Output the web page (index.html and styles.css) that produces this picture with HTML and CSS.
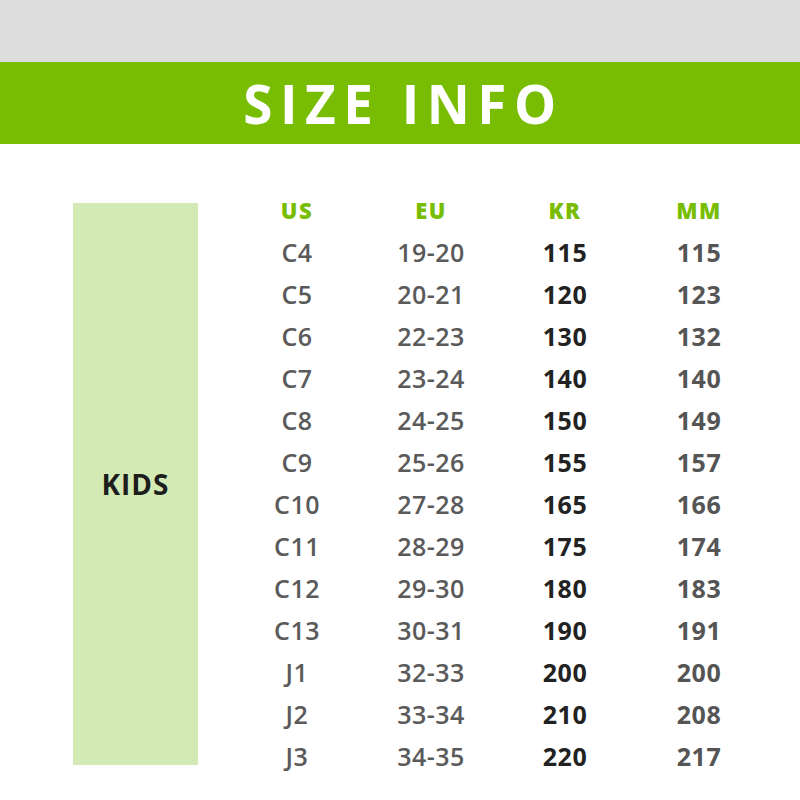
FILE: index.html
```html
<!DOCTYPE html>
<html>
<head>
<meta charset="utf-8">
<link rel="stylesheet" href="styles.css">
</head>
<body>
<div class="top"></div>
<div class="band"><h1 class="title">SIZE INFO</h1></div>
<div class="content">
  <div class="kids"><span>KIDS</span></div>
  <div class="table">
    <div class="h">US</div><div class="h">EU</div><div class="h">KR</div><div class="h">MM</div>
    <div>C4</div><div>19-20</div><div class="kr">115</div><div class="mm">115</div>
    <div>C5</div><div>20-21</div><div class="kr">120</div><div class="mm">123</div>
    <div>C6</div><div>22-23</div><div class="kr">130</div><div class="mm">132</div>
    <div>C7</div><div>23-24</div><div class="kr">140</div><div class="mm">140</div>
    <div>C8</div><div>24-25</div><div class="kr">150</div><div class="mm">149</div>
    <div>C9</div><div>25-26</div><div class="kr">155</div><div class="mm">157</div>
    <div>C10</div><div>27-28</div><div class="kr">165</div><div class="mm">166</div>
    <div>C11</div><div>28-29</div><div class="kr">175</div><div class="mm">174</div>
    <div>C12</div><div>29-30</div><div class="kr">180</div><div class="mm">183</div>
    <div>C13</div><div>30-31</div><div class="kr">190</div><div class="mm">191</div>
    <div>J1</div><div>32-33</div><div class="kr">200</div><div class="mm">200</div>
    <div>J2</div><div>33-34</div><div class="kr">210</div><div class="mm">208</div>
    <div>J3</div><div>34-35</div><div class="kr">220</div><div class="mm">217</div>
  </div>
</div>
</body>
</html>
```
FILE: styles.css
```css
html, body { margin: 0; padding: 0; background: #fff; }
body { font-family: "Open Sans", "Liberation Sans", sans-serif; width: 800px; height: 800px; overflow: hidden; }
.top { height: 62px; background: #dddddd; }
.band { height: 82px; background: #78bd02; display: flex; align-items: center; justify-content: center; }
.title { margin: 0; color: #fff; font-weight: 700; font-size: 53px; letter-spacing: 7.5px; line-height: 1; padding-left: 7px; }
.content { display: flex; padding-top: 46px; }
.kids { margin-left: 73px; margin-top: 13px; width: 125px; height: 562px; background: #d4eab5; display: flex; align-items: center; justify-content: center; }
.kids span { font-weight: 700; font-size: 28px; letter-spacing: 1px; color: #1d1d1d; }
.table { margin-left: 32px; display: grid; grid-template-columns: repeat(4, 134px); grid-auto-rows: 42px; text-align: center; font-size: 25px; font-weight: 600; color: #5a5a5a; line-height: 41px; letter-spacing: 0.5px; }
.h { color: #78bd02; font-weight: 800; font-size: 22px; letter-spacing: 1.5px; }
.kr { color: #222; font-weight: 700; }
.mm { color: #555; font-weight: 700; }
```
